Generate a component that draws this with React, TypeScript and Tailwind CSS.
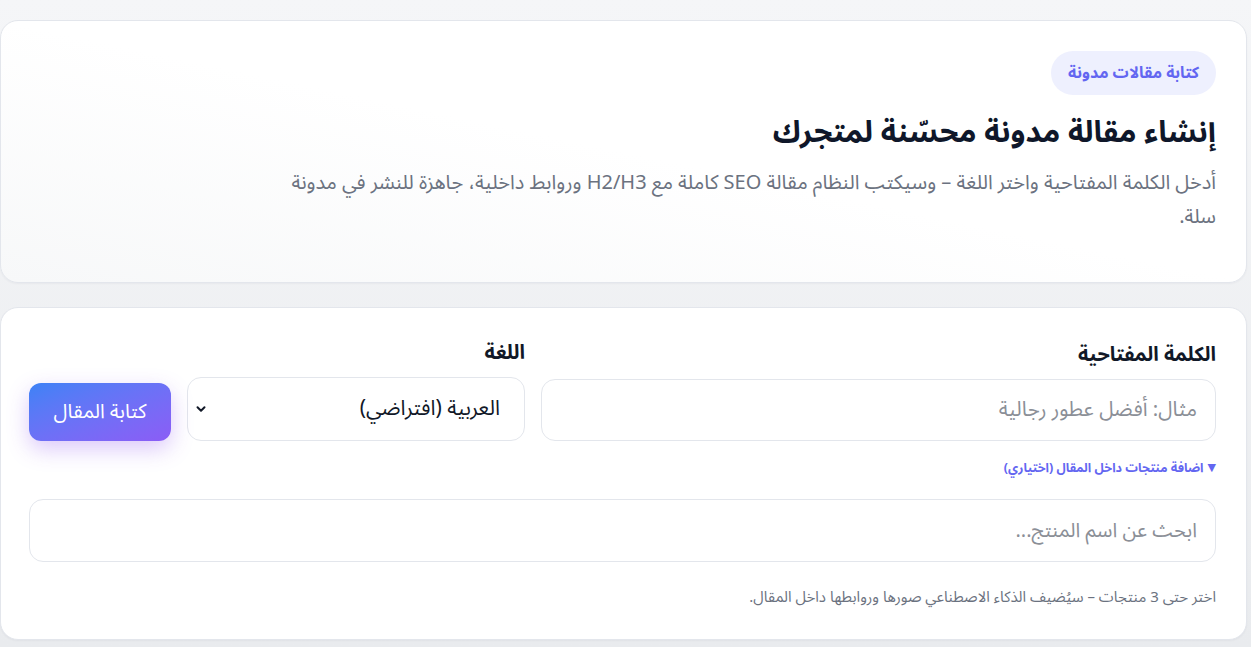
import React from "react";

function ChevronDown() {
  return (
    <svg width="14" height="14" viewBox="0 0 24 24" fill="none" stroke="#111827" strokeWidth="3.4" strokeLinecap="round" strokeLinejoin="round">
      <path d="M6 9l6 6 6-6" />
    </svg>
  );
}

export default function App() {
  return (
    <div
      dir="rtl"
      className="min-h-[647px] bg-gradient-to-b from-[#f5f6f8] to-[#e9ebee] pt-5 pb-2 pl-0 pr-1"
      style={{ fontFamily: '"Noto Sans Arabic", "Noto Sans", "DejaVu Sans", sans-serif' }}
    >
      {/* Intro card */}
      <section className="rounded-[18px] border border-[#e3e6ec] bg-gradient-to-bl from-white via-white to-[#f7f8f9] pr-[30px] pl-[28px] pt-[30px] pb-[48px] shadow-[0_1px_2px_rgba(15,23,42,0.04)]">
        <div className="flex">
          <span className="inline-flex h-[44px] items-center rounded-full bg-[#eef0fe] px-[17px] text-[16px] font-bold text-[#6366f1]">
            كتابة مقالات مدونة
          </span>
        </div>
        <h1 className="mt-[16px] text-[30px] font-bold leading-[44px] text-[#0f172a]">
          إنشاء مقالة مدونة محسّنة لمتجرك
        </h1>
        <p className="mt-[11px] max-w-[944px] text-[20px] leading-[34px] text-[#6b7280]">
          أدخل الكلمة المفتاحية واختر اللغة – وسيكتب النظام مقالة SEO كاملة مع H2/H3 وروابط داخلية، جاهزة للنشر في مدونة سلة.
        </p>
      </section>

      {/* Form card */}
      <section className="mt-[24px] rounded-[18px] border border-[#e3e6ec] bg-white pr-[30px] pl-[28px] pt-[31px] pb-[32px] shadow-[0_1px_2px_rgba(15,23,42,0.04)]">
        <div className="flex items-end gap-4">
          <label className="flex flex-1 flex-col">
            <span className="mb-[10px] text-[20px] font-bold leading-[28px] text-[#111827]">الكلمة المفتاحية</span>
            <div className="flex h-[62px] items-center rounded-[14px] border border-[#e3e6ec] bg-white px-[18px] text-[20.5px] text-[#8b8f97]">
              مثال: أفضل عطور رجالية
            </div>
          </label>
          <label className="flex w-[338px] flex-col">
            <span className="mb-[10px] text-[20px] font-bold leading-[28px] text-[#111827]">اللغة</span>
            <div className="flex h-[64px] items-center justify-between rounded-[14px] border border-[#e3e6ec] bg-white pr-[24px] pl-[6px] text-[21px] text-[#111827]">
              <span>العربية (افتراضي)</span>
              <ChevronDown />
            </div>
          </label>
          <button className="h-[58px] w-[142px] rounded-[12px] bg-gradient-to-br from-[#3b82f6] to-[#8b5cf6] text-[20px] text-white shadow-[0_8px_22px_rgba(124,58,237,0.28)]">
            كتابة المقال
          </button>
        </div>

        <div className="mt-[18px] flex h-[18px] items-center gap-1 text-[12.5px] font-bold text-[#6366f1]">
          <span className="text-[11px] text-[#6366f1]">▼</span>
          <span>اضافة منتجات داخل المقال (اختياري)</span>
        </div>

        <div className="mt-[22px] flex h-[63px] items-center rounded-[14px] border border-[#e3e6ec] bg-white px-[18px] text-[20px] text-[#8b8f97]">
          ابحث عن اسم المنتج...
        </div>

        <p className="mt-[25px] text-[15px] leading-[20px] text-[#6b7280]">
          اختر حتى 3 منتجات – سيُضيف الذكاء الاصطناعي صورها وروابطها داخل المقال.
        </p>
      </section>
    </div>
  );
}
